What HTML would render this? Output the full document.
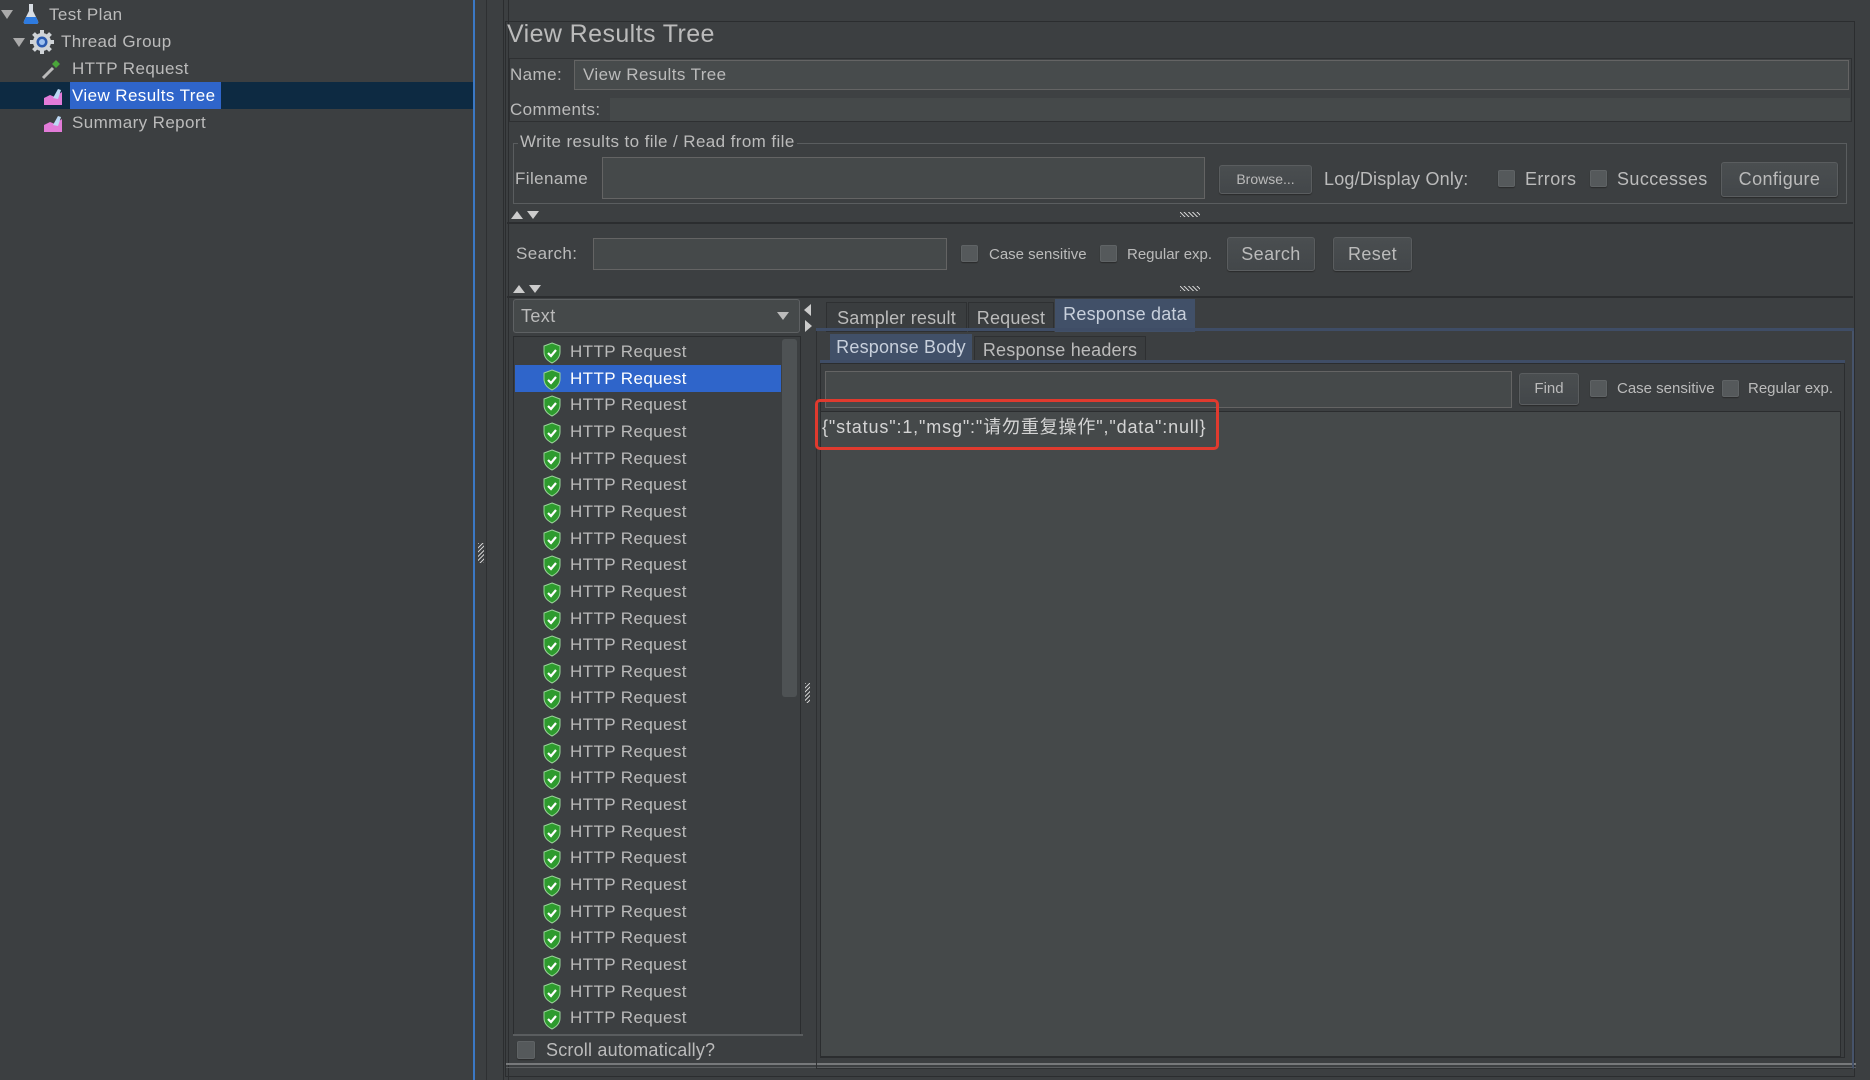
<!DOCTYPE html>
<html><head><meta charset="utf-8"><style>
*{box-sizing:border-box;margin:0;padding:0}
body{width:1870px;height:1080px;background:#3c3f41;font-family:"Liberation Sans","Noto Sans CJK SC",sans-serif;color:#bbbbbb;position:relative;overflow:hidden;font-size:17px;letter-spacing:0.4px}
.a{position:absolute;white-space:nowrap}
.s{letter-spacing:0}
.fld{position:absolute;background:#45494a;border:1px solid #646464}
.btn{position:absolute;background:linear-gradient(#4a4e50,#43474a);border:1px solid #5a5d5f;border-radius:3px;text-align:center;color:#bbbbbb;box-shadow:0 1px 1px #2b2b2b}
.cb{position:absolute;width:17px;height:17px;background:#55595b;border:1px solid #5f6365;border-radius:2px;box-shadow:0 1px 1px #2b2b2b}
.row{position:absolute;left:552px;height:27px;line-height:27px;font-size:17px}
.row svg{position:absolute;left:-10px;top:4px}
</style></head><body>

<div class="a" style="left:0;top:0;width:473px;height:1080px;background:#3c3f41"></div>
<div class="a" style="left:473px;top:0;width:2px;height:1080px;background:#3b78c4"></div>
<div class="a" style="left:486px;top:0;width:1px;height:1080px;background:#2e3032"></div>
<div class="a" style="left:503px;top:0;width:1px;height:1080px;background:#2b2d2f"></div>
<div class="a" style="left:508px;top:0;width:1px;height:1080px;background:#2b2d2f"></div>
<div class="a" style="left:478px;top:543px;width:6px;height:20px;background:repeating-linear-gradient(135deg,#ccc 0 1px,transparent 1px 3px)"></div>

<div class="a" style="left:0;top:82px;width:473px;height:27px;background:#0d2a42"></div>
<div class="a" style="left:70px;top:82px;width:151px;height:27px;background:#2f65ca"></div>

<svg class="a" style="left:0;top:7px" width="14" height="14"><path d="M1 3h12L7 12z" fill="#aaa"/></svg>
<svg class="a" style="left:22px;top:2px" width="18" height="24"><path d="M7 2h4v7l5 10q1 3-2 3H4q-3 0-2-3l5-10z" fill="#d8dde3"/><path d="M4 15h10l2 4q1 3-2 3H4q-3 0-2-3z" fill="#2e7be0"/></svg>
<div class="a" style="left:49px;top:1px;line-height:27px">Test Plan</div>

<svg class="a" style="left:12px;top:35px" width="14" height="14"><path d="M1 3h12L7 12z" fill="#aaa"/></svg>
<svg class="a" style="left:29px;top:29px" width="26" height="26"><g fill="#cfd3d7"><circle cx="13" cy="13" r="9"/><rect x="11" y="1" width="4" height="24"/><rect x="1" y="11" width="24" height="4"/><rect x="11" y="1" width="4" height="24" transform="rotate(45 13 13)"/><rect x="11" y="1" width="4" height="24" transform="rotate(-45 13 13)"/></g><circle cx="13" cy="13" r="5.5" fill="#2a5ab0"/><circle cx="13" cy="13" r="3" fill="#9cc0f0"/></svg>
<div class="a" style="left:61px;top:28px;line-height:27px">Thread Group</div>

<svg class="a" style="left:40px;top:56px" width="24" height="24"><path d="M3 22l10-10" stroke="#bbb" stroke-width="3"/><path d="M12 8l4-4 4 4-4 4z" fill="#4aa63a"/></svg>
<div class="a" style="left:72px;top:55px;line-height:27px">HTTP Request</div>

<svg class="a" style="left:43px;top:86px" width="20" height="20"><path d="M1 19V12l6-3 5 2 7-5v13z" fill="#e27bd8"/><path d="M10 12l5-9 3 1-3 9z" fill="#bcd8f4"/></svg>
<div class="a" style="left:72px;top:82px;line-height:27px;color:#fff">View Results Tree</div>

<svg class="a" style="left:43px;top:113px" width="20" height="20"><path d="M1 19V12l6-3 5 2 7-5v13z" fill="#e27bd8"/><path d="M10 12l5-9 3 1-3 9z" fill="#bcd8f4"/></svg>
<div class="a" style="left:72px;top:109px;line-height:27px">Summary Report</div>

<div class="a" style="left:505px;top:21px;width:1350px;height:1056px;border:1px solid #2b2d2f"></div>
<div class="a" style="left:507px;top:18px;font-size:25px;line-height:32px">View Results Tree</div>

<div class="a" style="left:509px;top:58px;width:1343px;height:64px;border:1px solid #2e3032;background:#3e4143"></div>
<div class="a" style="left:510px;top:60px;line-height:30px">Name:</div>
<div class="fld" style="left:574px;top:60px;width:1275px;height:30px;background:#474b4c"></div>
<div class="a" style="left:583px;top:60px;line-height:30px">View Results Tree</div>
<div class="a" style="left:510px;top:98px;line-height:24px">Comments:</div>
<div class="a" style="left:610px;top:98px;width:1240px;height:23px;background:#45494a"></div>

<div class="a" style="left:513px;top:143px;width:1334px;height:61px;border:1px solid #5a5d5f"></div>
<div class="a" style="left:518px;top:130px;line-height:24px;background:#3c3f41;padding:0 2px">Write results to file / Read from file</div>
<div class="a" style="left:515px;top:166px;line-height:26px">Filename</div>
<div class="fld" style="left:602px;top:157px;width:603px;height:42px"></div>
<div class="btn s" style="left:1219px;top:165px;width:93px;height:29px;font-size:14px;line-height:27px">Browse...</div>
<div class="a" style="left:1324px;top:166px;line-height:26px;font-size:18px;letter-spacing:0.2px">Log/Display Only:</div>
<div class="cb" style="left:1498px;top:170px"></div>
<div class="a" style="left:1525px;top:166px;line-height:26px;font-size:18px">Errors</div>
<div class="cb" style="left:1590px;top:170px"></div>
<div class="a" style="left:1617px;top:166px;line-height:26px;font-size:18px">Successes</div>
<div class="btn" style="left:1721px;top:162px;width:117px;height:35px;font-size:18px;line-height:33px">Configure</div>

<svg class="a" style="left:510px;top:209px" width="36" height="12"><path d="M1 10L7 2l6 8z" fill="#ccc"/><path d="M17 2h12l-6 8z" fill="#ccc"/></svg>
<div class="a" style="left:1180px;top:212px;width:20px;height:5px;background:repeating-linear-gradient(45deg,#ccc 0 1px,transparent 1px 3px)"></div>
<div class="a" style="left:507px;top:222px;width:1346px;height:2px;background:#2b2d2f"></div>

<div class="a" style="left:516px;top:241px;line-height:26px">Search:</div>
<div class="fld" style="left:593px;top:238px;width:354px;height:32px"></div>
<div class="cb" style="left:961px;top:245px"></div>
<div class="a s" style="left:989px;top:242px;line-height:26px;font-size:15px">Case sensitive</div>
<div class="cb" style="left:1100px;top:245px"></div>
<div class="a s" style="left:1127px;top:242px;line-height:26px;font-size:15px">Regular exp.</div>
<div class="btn" style="left:1227px;top:237px;width:88px;height:34px;line-height:32px;font-size:18px">Search</div>
<div class="btn" style="left:1333px;top:237px;width:79px;height:34px;line-height:32px;font-size:18px">Reset</div>

<svg class="a" style="left:512px;top:283px" width="36" height="12"><path d="M1 10L7 2l6 8z" fill="#ccc"/><path d="M17 2h12l-6 8z" fill="#ccc"/></svg>
<div class="a" style="left:1180px;top:286px;width:20px;height:5px;background:repeating-linear-gradient(45deg,#ccc 0 1px,transparent 1px 3px)"></div>
<div class="a" style="left:507px;top:296px;width:1346px;height:2px;background:#2b2d2f"></div>

<div class="a" style="left:513px;top:299px;width:287px;height:34px;background:#45494a;border:1px solid #5e6163;border-radius:3px"></div>
<div class="a" style="left:521px;top:302px;line-height:28px;font-size:18px">Text</div>
<svg class="a" style="left:776px;top:310px" width="14" height="12"><path d="M1 2h12L7 10z" fill="#bbb"/></svg>
<div class="a" style="left:513px;top:336px;width:288px;height:699px;border:1px solid #2b2d2f;background:#3c3f41"></div>
<div class="a" style="left:515px;top:365px;width:266px;height:27px;background:#2f65ca"></div>
<div class="a" style="left:782px;top:339px;width:15px;height:358px;background:#4e5254;border-radius:3px"></div>
<div class="a" style="left:513px;top:1034px;width:290px;height:2px;background:#5a5d5f"></div>
<div class="cb" style="left:517px;top:1041px;width:18px;height:18px"></div>
<div class="a" style="left:546px;top:1037px;line-height:26px;font-size:18px;letter-spacing:0.2px">Scroll automatically?</div>
<div class="a" style="left:506px;top:1063px;width:1350px;height:2px;background:#77797b"></div>
<div class="a" style="left:506px;top:1067px;width:1350px;height:1px;background:#5a5d5f"></div>

<div id="rows"></div>

<svg class="a" style="left:802px;top:302px" width="12" height="32"><path d="M9 2v12L2 8z" fill="#ccc"/><path d="M3 18v12l7-6z" fill="#ccc"/></svg>
<div class="a" style="left:805px;top:683px;width:5px;height:20px;background:repeating-linear-gradient(135deg,#ccc 0 1px,transparent 1px 3px)"></div>

<div class="a" style="left:826px;top:302px;width:141px;height:30px;background:#3a3d3f;border:1px solid #2e3032;text-align:center;line-height:30px;font-size:18px;letter-spacing:0.2px">Sampler result</div>
<div class="a" style="left:968px;top:302px;width:86px;height:30px;background:#3a3d3f;border:1px solid #2e3032;text-align:center;line-height:30px;font-size:18px;letter-spacing:0.2px">Request</div>
<div class="a" style="left:1055px;top:299px;width:140px;height:33px;background:#415068;text-align:center;line-height:30px;font-size:18px;color:#c8d0dc;letter-spacing:0.2px">Response data</div>
<div class="a" style="left:816px;top:328px;width:1038px;height:3px;background:#3f4d66"></div>
<div class="a" style="left:816px;top:331px;width:1038px;height:738px;border:1px solid #2e3032;border-top:0;border-right:2px solid #46536a"></div>
<div class="a" style="left:830px;top:334px;width:142px;height:28px;background:#415068;text-align:center;line-height:27px;font-size:18px;color:#c8d0dc;letter-spacing:0.2px">Response Body</div>
<div class="a" style="left:974px;top:336px;width:172px;height:26px;background:#3a3d3f;border:1px solid #2e3032;text-align:center;line-height:27px;font-size:18px;letter-spacing:0.2px">Response headers</div>
<div class="a" style="left:820px;top:360px;width:1025px;height:3px;background:#3f4d66"></div>
<div class="a" style="left:820px;top:363px;width:1025px;height:695px;border:1px solid #2b2d2f"></div>

<div class="fld" style="left:825px;top:371px;width:687px;height:37px"></div>
<div class="btn s" style="left:1519px;top:373px;width:60px;height:32px;line-height:30px;font-size:15px">Find</div>
<div class="cb" style="left:1590px;top:380px"></div>
<div class="a s" style="left:1617px;top:376px;line-height:26px;font-size:15px">Case sensitive</div>
<div class="cb" style="left:1722px;top:380px"></div>
<div class="a s" style="left:1748px;top:376px;line-height:26px;font-size:15px">Regular exp.</div>

<div class="a" style="left:820px;top:411px;width:1021px;height:646px;background:#45494a;border:1px solid #2b2d2f"></div>
<div class="a" style="left:822px;top:414px;line-height:26px;font-size:18px;color:#d4d4d4;letter-spacing:0.85px">{"status":1,"msg":"请勿重复操作","data":null}</div>
<div class="a" style="left:815px;top:399px;width:404px;height:51px;border:3px solid #e03a2e;border-radius:5px"></div>

<script>
var h='';for(var i=0;i<26;i++){var t=351+i*26.65-13;h+='<div class="row" style="top:'+t+'px;'+(i==1?'color:#fff':'')+'"><svg width="20" height="22" viewBox="0 0 20 22"><path d="M10 1l8 3v6c0 6-4 9-8 11C6 19 2 16 2 10V4z" fill="#2e9b2e" stroke="#9ad39a" stroke-width="1"/><path d="M6 11l3 3 5-6" stroke="#fff" stroke-width="2.2" fill="none"/></svg><span style="margin-left:18px">HTTP Request</span></div>';}
document.getElementById('rows').innerHTML=h;
</script>
</body></html>
